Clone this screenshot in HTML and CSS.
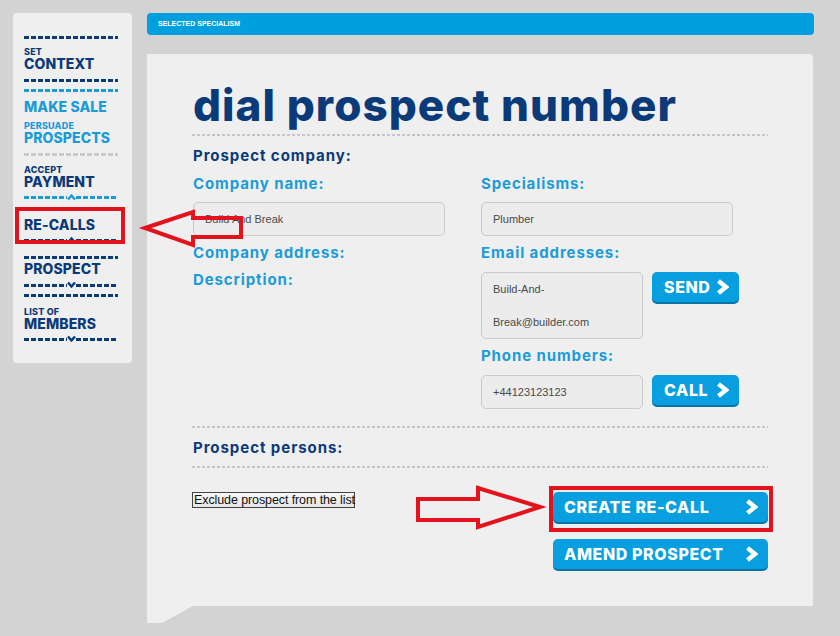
FILE: index.html
```html
<!DOCTYPE html>
<html>
<head>
<meta charset="utf-8">
<link rel="stylesheet" href="styles.css">
</head>
<body>
<div class="page">
  <aside class="sidebar">
    <div class="dash navy"></div>
    <div class="item navy s1"><span class="sm">SET</span><span class="lg">CONTEXT</span></div>
    <div class="dash navy d2"></div>
    <div class="dash blue d3"></div>
    <div class="item blue s2"><span class="lg">MAKE SALE</span></div>
    <div class="item blue s3"><span class="sm">PERSUADE</span><span class="lg">PROSPECTS</span></div>
    <div class="dash grey d4"></div>
    <div class="item navy s4"><span class="sm">ACCEPT</span><span class="lg">PAYMENT</span></div>
    <div class="cdash blue d5"><span class="seg"></span><svg width="9" height="6" viewBox="0 0 9 6"><polyline points="1,5.5 4.5,1.5 8,5.5" fill="none" stroke="#1b9bd7" stroke-width="2.4"/></svg><span class="seg"></span></div>
    <div class="item navy s5"><span class="lg">RE-CALLS</span></div>
    <div class="cdash navy d6"><span class="seg"></span><svg width="9" height="6" viewBox="0 0 9 6"><polyline points="1,5.5 4.5,1.5 8,5.5" fill="none" stroke="#0b3a78" stroke-width="2.4"/></svg><span class="seg"></span></div>
    <div class="dash navy d7"></div>
    <div class="item navy s6"><span class="lg">PROSPECT</span></div>
    <div class="cdash navy d8"><span class="seg"></span><svg width="9" height="6" viewBox="0 0 9 6"><polyline points="1,0.5 4.5,4.5 8,0.5" fill="none" stroke="#0b3a78" stroke-width="2.4"/></svg><span class="seg"></span></div>
    <div class="dash navy d9"></div>
    <div class="item navy s7"><span class="sm">LIST OF</span><span class="lg">MEMBERS</span></div>
    <div class="cdash navy d10"><span class="seg"></span><svg width="9" height="6" viewBox="0 0 9 6"><polyline points="1,0.5 4.5,4.5 8,0.5" fill="none" stroke="#0b3a78" stroke-width="2.4"/></svg><span class="seg"></span></div>
  </aside>

  <main class="main">
    <div class="topbar">SELECTED SPECIALISM</div>
    <section class="panel">
      <h1 class="title">dial prospect number</h1>
      <div class="rule"></div>
      <div class="section-label">Prospect company:</div>
      <div class="grid">
        <div class="col">
          <div class="label">Company name:</div>
          <div class="field">Build And Break</div>
          <div class="label l2">Company address:</div>
          <div class="label l3">Description:</div>
        </div>
        <div class="col">
          <div class="label">Specialisms:</div>
          <div class="field">Plumber</div>
          <div class="label l2">Email addresses:</div>
          <div class="row r1">
            <div class="field small tall">Build-And-<br>Break@builder.com</div>
            <div class="btn short">SEND<svg class="chev" width="12" height="16" viewBox="0 0 12 16"><path d="M1.5 2 L9 8 L1.5 14" fill="none" stroke="#fff" stroke-width="4.4" stroke-linejoin="miter"/></svg></div>
          </div>
          <div class="label l4">Phone numbers:</div>
          <div class="row r2">
            <div class="field small">+44123123123</div>
            <div class="btn short">CALL<svg class="chev" width="12" height="16" viewBox="0 0 12 16"><path d="M1.5 2 L9 8 L1.5 14" fill="none" stroke="#fff" stroke-width="4.4" stroke-linejoin="miter"/></svg></div>
          </div>
        </div>
      </div>
      <div class="rule r-b"></div>
      <div class="section-label s-b">Prospect persons:</div>
      <div class="rule r-c"></div>
      <div class="actions">
        <button class="exclude">Exclude prospect from the list</button>
        <div class="btncol">
          <div class="btn wide">CREATE RE-CALL<svg class="chev" width="12" height="16" viewBox="0 0 12 16"><path d="M1.5 2 L9 8 L1.5 14" fill="none" stroke="#fff" stroke-width="4.4" stroke-linejoin="miter"/></svg></div>
          <div class="btn wide">AMEND PROSPECT<svg class="chev" width="12" height="16" viewBox="0 0 12 16"><path d="M1.5 2 L9 8 L1.5 14" fill="none" stroke="#fff" stroke-width="4.4" stroke-linejoin="miter"/></svg></div>
        </div>
      </div>
    </section>
  </main>
</div>

<svg class="annot" width="840" height="636" viewBox="0 0 840 636">
  <rect x="17" y="209" width="106" height="33" fill="none" stroke="#e2131d" stroke-width="4"/>
  <polygon points="145,228 193,212 193,218 241,218 241,237 193,237 193,245" fill="none" stroke="#e2131d" stroke-width="4" stroke-linejoin="miter"/>
  <rect x="551" y="488" width="220" height="42" fill="none" stroke="#e2131d" stroke-width="4"/>
  <polygon points="540,507 478,488 478,499 418,499 418,520 478,520 478,527" fill="none" stroke="#e2131d" stroke-width="4" stroke-linejoin="miter"/>
</svg>
</body>
</html>
```

FILE: styles.css
```css
html, body {
  margin: 0;
  padding: 0;
}
body {
  width: 840px;
  height: 636px;
  overflow: hidden;
  background-color: #d3d3d3;
  font-family: Inter, "Open Sans", sans-serif;
  position: relative;
}
.page {
  display: flex;
  align-items: flex-start;
  gap: 15px;
  padding: 13px 0 0 13px;
}

/* sidebar */
.sidebar {
  width: 94px;
  height: 327px;
  padding: 23px 14px 0 11px;
  background: #efefef;
  border-radius: 4px;
  display: flex;
  flex-direction: column;
}
.dash {
  height: 3px;
  width: 94px;
}
.dash.navy, .cdash.navy .seg { background: repeating-linear-gradient(90deg, #0b3a78 0 5px, transparent 5px 7px); }
.dash.blue, .cdash.blue .seg { background: repeating-linear-gradient(90deg, #1b9bd7 0 5px, transparent 5px 7px); }
.dash.grey { background: repeating-linear-gradient(90deg, #c9c9c9 0 5px, transparent 5px 7px); }
.cdash {
  display: flex;
  align-items: center;
  width: 94px;
  height: 6px;
}
.cdash .seg {
  flex: 1;
  height: 3px;
}
.cdash svg { display: block; }
.item {
  display: flex;
  flex-direction: column;
  font-weight: 800;
  text-transform: uppercase;
}
.item.navy { color: #0b3a78; }
.item.blue { color: #1b9bd7; }
.item .sm { font-size: 9px; line-height: 10px; letter-spacing: 0.2px; }
.item .lg { font-size: 14px; line-height: 13px; letter-spacing: 0.1px; }
.s1 { margin-top: 8px; }
.d2 { margin-top: 9px; }
.d3 { margin-top: 7px; }
.s2 { margin-top: 8px; }
.s3 { margin-top: 8px; }
.d4 { margin-top: 9px; }
.s4 { margin-top: 9px; }
.d5 { margin-top: 6px; }
.s5 { margin-top: 18px; }
.d6 { margin-top: 6px; }
.d7 { margin-top: 13px; }
.s6 { margin-top: 3px; }
.d8 { margin-top: 7px; }
.d9 { margin-top: 6px; }
.s7 { margin-top: 10px; }
.d10 { margin-top: 6px; }

/* main */
.main {
  width: 667px;
  display: flex;
  flex-direction: column;
}
.topbar {
  height: 22px;
  background: #029fdf;
  border-radius: 4px;
  color: #fff;
  font-family: "Liberation Sans", Arial, sans-serif;
  font-weight: bold;
  font-size: 7px;
  line-height: 22px;
  padding-left: 11px;
}
.panel {
  position: relative;
  margin-top: 19px;
  width: 575px;
  height: 526px;
  padding: 26px 45px 0 46px;
  background: #efefef;
  border-radius: 0 4px 0 0;
}
.panel::after {
  content: "";
  position: absolute;
  left: 0;
  top: 100%;
  width: 46px;
  height: 17px;
  background: #efefef;
  clip-path: polygon(0 0, 100% 0, 15px 100%, 0 100%);
}
.title {
  margin: 0;
  font-size: 44px;
  line-height: 50px;
  font-weight: 800;
  color: #0b3a78;
  letter-spacing: 1.05px;
}
.rule {
  height: 2px;
  margin-top: 4px;
  width: 576px;
  margin-left: -1px;
  background: repeating-linear-gradient(90deg, #c6c6c6 0 3px, transparent 3px 5px);
}
.section-label {
  margin-top: 10px;
  font-size: 15px;
  line-height: 20px;
  font-weight: 700;
  color: #0b3a78;
  letter-spacing: 0.95px;
}
.grid {
  margin-top: 8px;
  display: grid;
  grid-template-columns: 252px 1fr;
  column-gap: 36px;
}
.col {
  display: flex;
  flex-direction: column;
  align-items: flex-start;
}
.label {
  font-size: 15px;
  line-height: 20px;
  font-weight: 700;
  color: #1b9bd7;
  letter-spacing: 0.9px;
}
.field {
  margin-top: 8px;
  width: 252px;
  height: 34px;
  box-sizing: border-box;
  border: 1px solid #cacaca;
  border-radius: 5px;
  background: #ececec;
  padding-left: 11px;
  font-family: "Liberation Sans", Arial, sans-serif;
  font-size: 11px;
  line-height: 32px;
  color: #4a4a4a;
}
.l2 { margin-top: 7px; }
.l3 { margin-top: 7px; }
.l4 { margin-top: 7px; }
.row {
  display: flex;
  gap: 9px;
  align-items: flex-start;
  margin-top: 9px;
}
.row .field { margin-top: 0; }
.field.small { width: 162px; }
.field.tall { height: 67px; line-height: 33px; }
.btn {
  display: flex;
  align-items: center;
  justify-content: space-between;
  box-sizing: border-box;
  height: 30px;
  background: #079fe0;
  border-radius: 5px;
  box-shadow: 0 2px 0 #0775a8;
  color: #fff;
  font-weight: 800;
  font-size: 16px;
  letter-spacing: 0.6px;
}
.btn.short { width: 87px; padding: 0 10px 0 12px; }
.btn.wide { width: 215px; padding: 0 10px 0 11px; }
.chev { display: block; }
.r-b { margin-top: 17px; }
.s-b { margin-top: 10px; }
.r-c { margin-top: 8px; }
.actions {
  margin-top: 24px;
  display: flex;
  justify-content: space-between;
  align-items: flex-start;
}
.exclude {
  margin-left: -1px;
  height: 16px;
  width: 163px;
  padding: 0 0 0 1px;
  text-align: left;
  border: 1px solid #444;
  background: linear-gradient(#f7f7f7, #e6e6e6);
  font-family: "Liberation Sans", Arial, sans-serif;
  font-size: 12.5px;
  line-height: 14px;
  color: #111;
  letter-spacing: -0.1px;
  white-space: nowrap;
}
.btncol {
  display: flex;
  flex-direction: column;
  gap: 17px;
}

.annot {
  position: absolute;
  left: 0;
  top: 0;
  pointer-events: none;
}
```
